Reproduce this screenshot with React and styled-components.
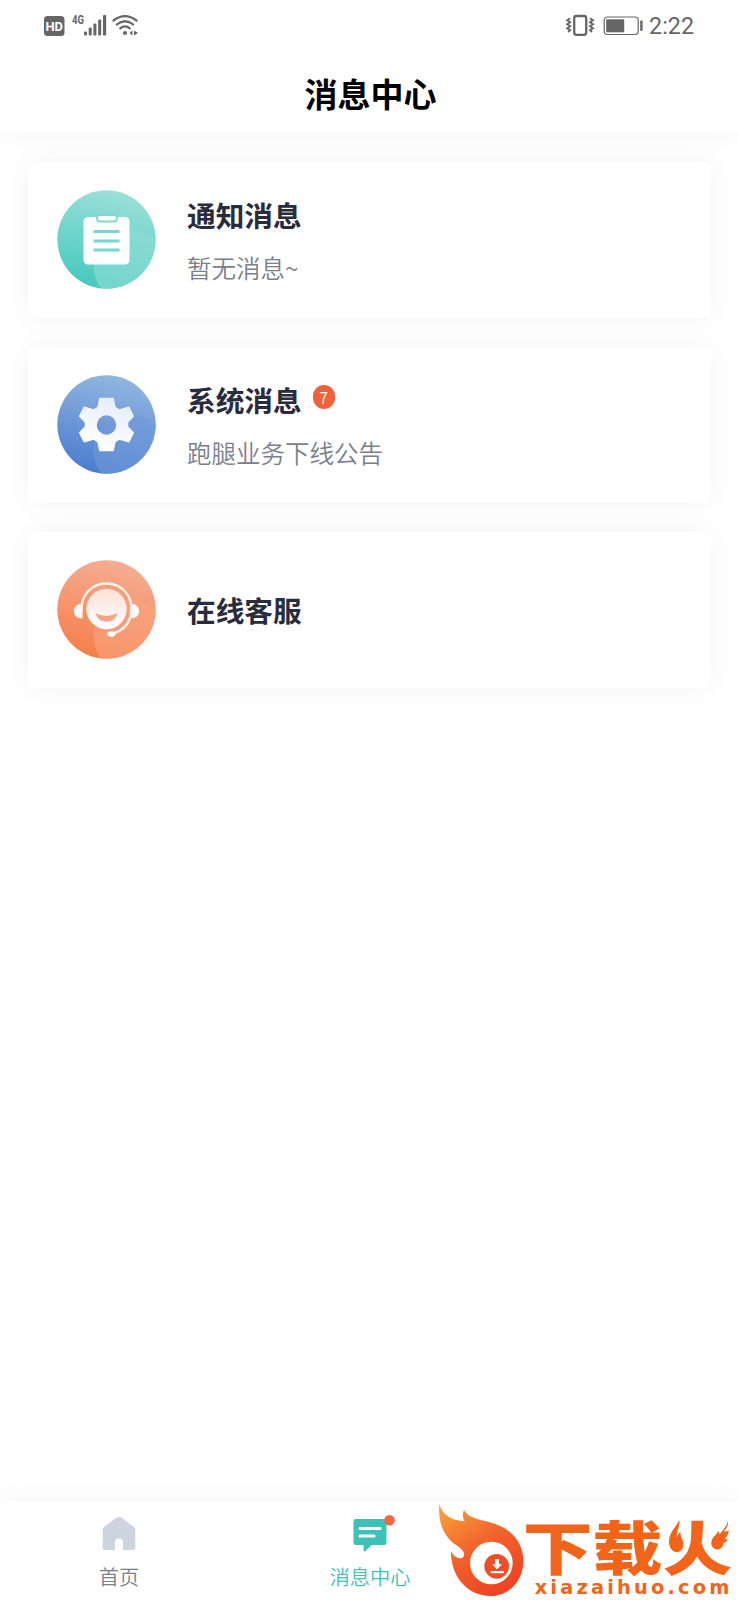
import React from 'react';
import styled, { createGlobalStyle } from 'styled-components';

const palette = {
  teal: '#3dc2b8',
  orange: '#f0623a',
  brand: '#f26419',
  title: '#292c3c',
  sub: '#7b7e8b',
  status: '#666666',
};

const GlobalStyle = createGlobalStyle`
  * {
    box-sizing: border-box;
  }
  body {
    margin: 0;
    background: #fff;
    font-family: 'Noto Sans CJK SC', 'Noto Sans', sans-serif;
  }
`;

const StatusIcons = () => (
  <svg width="110" height="30" viewBox="0 0 110 30">
    <rect x="1" y="6" width="20.5" height="20" rx="3.5" fill={palette.status} />
    <StatusText x="2.5" y="20.8" fontSize="13.5" textLength="17.5" lengthAdjust="spacingAndGlyphs" fill="#fff">
      HD
    </StatusText>
    <StatusText x="29" y="14" fontSize="12.5" textLength="12" lengthAdjust="spacingAndGlyphs">
      4G
    </StatusText>
    <g fill={palette.status}>
      <rect x="41" y="21.5" width="3" height="4" rx="1" />
      <rect x="45.7" y="17.5" width="3" height="8" rx="1" />
      <rect x="50.4" y="13.5" width="3" height="12" rx="1" />
      <rect x="55.2" y="9.5" width="3" height="16" rx="1" />
      <rect x="60" y="5" width="3.2" height="20.5" rx="1" />
      <circle cx="82" cy="23" r="2.1" />
      <path d="M89.5 20.5v5l-3-2.5zM91 20.5l4 2.5-4 2.5z" />
    </g>
    <g fill="none" stroke={palette.status} strokeWidth="2.2" strokeLinecap="round">
      <path d="M70.5 10.5Q82 1.8 93.5 10.5" />
      <path d="M73.8 14.5Q82 8 90.2 14.5" />
      <path d="M77.2 18.4Q82 14.5 86.8 18.4" />
    </g>
  </svg>
);

const PowerIcons = () => (
  <svg width="78" height="30" viewBox="0 0 78 30">
    <g fill="none" stroke={palette.status}>
      <rect x="9.2" y="6" width="12" height="18.8" rx="2.2" strokeWidth="2.3" />
      <path
        d="M5.2 8.2l-3 2 3 2-3 2 3 2-3 2 3 2-2 1.8M25 8.2l3 2-3 2 3 2-3 2 3 2-3 2 2 1.8"
        strokeWidth="1.9"
      />
      <rect x="39.2" y="7" width="34" height="17.5" rx="3.2" strokeWidth="1.2" />
    </g>
    <rect x="41.2" y="9.3" width="18" height="13" fill={palette.status} />
    <rect x="75.2" y="10.5" width="2.4" height="10.5" rx="0.8" fill={palette.status} />
  </svg>
);

const RoundIcon = ({ id, from, to, shine, children }) => (
  <IconSvg width="99" height="99" viewBox="0 0 99 99">
    <defs>
      <linearGradient id={`${id}-bg`} x1="0.62" y1="0" x2="0.38" y2="1">
        <stop offset="0" stopColor={from} />
        <stop offset="1" stopColor={to} />
      </linearGradient>
      <clipPath id={`${id}-clip`}>
        <circle cx="49.5" cy="49.5" r="49.2" />
      </clipPath>
    </defs>
    <circle cx="49.5" cy="49.5" r="49.2" fill={`url(#${id}-bg)`} />
    <g clipPath={`url(#${id}-clip)`}>
      <circle cx="73" cy="76" r="36.5" fill={shine} fillOpacity="0.6" />
    </g>
    {children}
  </IconSvg>
);

const NoticeIcon = () => (
  <RoundIcon id="notice" from="#9de0d9" to="#46c9be" shine="#8fded7">
    <rect x="26.5" y="27" width="46" height="47.5" rx="4.5" fill="#fbfffe" />
    <rect x="40" y="25" width="20" height="6.5" rx="3" fill="#fbfffe" stroke="#84d7cf" strokeWidth="1.8" />
    <path d="M36.5 41.5h26M36.5 51h26M36.5 60h26" stroke="#7fd5ce" strokeWidth="3.2" />
  </RoundIcon>
);

const SystemIcon = () => (
  <RoundIcon id="system" from="#92b7e0" to="#4b7ccf" shine="#6f9adb">
    <defs>
      <linearGradient id="gear" x1="0.7" y1="0" x2="0.3" y2="1">
        <stop offset="0" stopColor="#e6edf8" />
        <stop offset="1" stopColor="#fff" />
      </linearGradient>
      <mask id="gear-hole">
        <rect width="99" height="99" fill="#fff" />
        <circle cx="49.5" cy="50" r="9.7" fill="#000" />
      </mask>
    </defs>
    <path
      mask="url(#gear-hole)"
      fill="url(#gear)"
      stroke="url(#gear)"
      strokeWidth="1.6"
      strokeLinejoin="round"
      d="M43 23.5h13l2 9 4.5 2.6 9.3-2.8 4.5 9-5.8 6v4.4l5.8 6-4.5 9-9.3-2.8-4.5 2.6-2 9H43l-2-9-4.5-2.6-9.3 2.8-4.5-9 5.8-6v-4.4l-5.8-6 4.5-9 9.3 2.8 4.5-2.6z"
    />
  </RoundIcon>
);

const ServiceIcon = () => (
  <RoundIcon id="service" from="#f5ae95" to="#f67e49" shine="#faa582">
    <defs>
      <linearGradient id="face" x1="0" y1="0" x2="0" y2="1">
        <stop offset="0" stopColor="#fce0d6" />
        <stop offset="1" stopColor="#fff" />
      </linearGradient>
    </defs>
    <path d="M25.5 43.5v15c-5 0-8.7-3-8.7-7.2 0-4.3 3.7-7.8 8.7-7.8zM73.5 43.5v15c5 0 8.7-3 8.7-7.2 0-4.3-3.7-7.8-8.7-7.8z" fill="#fff8f5" />
    <path
      d="M24.8 52C23 36 34 23.5 49.5 23.5S76 36 74.2 52C73 63 66 71 54 74"
      fill="none"
      stroke="#fff2ed"
      strokeWidth="2.3"
    />
    <circle cx="49.5" cy="49" r="20.2" fill="url(#face)" />
    <path d="M38.5 53q11 6 22 0c-1.5 5.5-5.5 8.7-11 8.7s-9.5-3.2-11-8.7z" fill="#f6a487" />
    <ellipse cx="54.3" cy="74" rx="4" ry="2.7" fill="#fff" />
  </RoundIcon>
);

const HomeIcon = () => (
  <TabIcon width="34" height="36" viewBox="0 0 34 36">
    <path
      d="M14.7 1.6q2.3-1.7 4.6 0l12.5 9.3q1.5 1.2 1.5 3V32q0 2-2 2H21v-7.5a4 4 0 0 0-8 0V34H2.7q-2 0-2-2V13.9q0-1.8 1.5-3z"
      fill="#ccd4df"
    />
  </TabIcon>
);

const MessageIcon = () => (
  <TabIcon $shift width="44" height="38" viewBox="0 0 44 38">
    <path
      d="M4 5h28q2.5 0 2.5 2.5v21q0 2.5-2.5 2.5H19.5l-6 6q-2 1.3-2-1V31H4q-2.5 0-2.5-2.5v-21Q1.5 5 4 5z"
      fill={palette.teal}
    />
    <path d="M8 14.5h20M8 22h14" stroke="#fff" strokeWidth="3.2" strokeLinecap="round" />
    <circle cx="37.5" cy="6.3" r="5.3" fill="#ef6842" />
  </TabIcon>
);

const BrandLogo = () => (
  <svg width="308" height="110" viewBox="0 0 924 330">
    <defs>
      <linearGradient id="flame" x1="0.05" y1="0" x2="0.6" y2="1">
        <stop offset="0" stopColor="#f9a53a" />
        <stop offset="0.5" stopColor="#f2642d" />
        <stop offset="1" stopColor="#ee4423" />
      </linearGradient>
    </defs>
    <path
      fill="url(#flame)"
      d="M28 43C38 76 64 92 104 94 97 82 97 71 102 60c12 22 36 26 78 37 63 16 100 60 100 116 0 61-44 105-99 105-67 0-119-56-118-134 9 17 24 25 34 19 13-9 2-26-20-39C40 140 23 93 28 43z"
    />
    <circle cx="184" cy="219" r="64" fill="#fff" />
    <circle cx="200" cy="229" r="37" fill="#ef4d25" />
    <path d="M195 208h12v15h9l-15 15-15-15h9zM182 243h40v7h-40z" fill="#fff" />
    <BrandName x="278" y="240" fontSize="175" textLength="629" lengthAdjust="spacingAndGlyphs">
      下载火
    </BrandName>
    {/* side strokes of the last character are replaced by two small flames */}
    <path fill="#fff" d="M706 80h75v82l-12 30h-63zM827 80h97v110h-70l-27-24z" />
    <path
      fill={palette.brand}
      d="M748 90c-12 24-29 36-31 62-1 20 9 34 23 34 15 0 22-14 19-30-2-12-9-18-7-30-6 4-10 10-11 17-4-20 10-30 7-53z"
    />
    <path
      fill={palette.brand}
      d="M893 92c4 16-7 26-11 32q8 2 14-4c0 14-8 23-12 26q5 3 9 1c-3 9-8 11-12 11-1 14-13 22-23 20-16-4-18-22-8-36 6-8 12-10 14-20q5 6 4 12c10-14 22-22 25-42z"
    />
    <BrandUrl x="314" y="312" fontSize="58" textLength="584">
      xiazaihuo.com
    </BrandUrl>
  </svg>
);

const MessageCard = ({ icon, title, desc, count }) => (
  <Card>
    {icon}
    <CardBody>
      <CardTitle>
        {title}
        {count && <Badge>{count}</Badge>}
      </CardTitle>
      {desc && <CardDesc>{desc}</CardDesc>}
    </CardBody>
  </Card>
);

const App = () => (
  <Screen>
    <GlobalStyle />
    <Header>
      <StatusBar>
        <StatusIcons />
        <StatusRight>
          <PowerIcons />
          <Clock>2:22</Clock>
        </StatusRight>
      </StatusBar>
      <PageTitle>消息中心</PageTitle>
    </Header>
    <CardList>
      <MessageCard icon={<NoticeIcon />} title="通知消息" desc="暂无消息~" />
      <MessageCard icon={<SystemIcon />} title="系统消息" desc="跑腿业务下线公告" count={7} />
      <MessageCard icon={<ServiceIcon />} title="在线客服" />
    </CardList>
    <TabBar>
      <Tab>
        <HomeIcon />
        <TabLabel>首页</TabLabel>
      </Tab>
      <Tab $active>
        <MessageIcon />
        <TabLabel>消息中心</TabLabel>
      </Tab>
    </TabBar>
    <Watermark>
      <BrandLogo />
    </Watermark>
  </Screen>
);

const Screen = styled.div`
  position: relative;
  display: flex;
  flex-direction: column;
  width: 738px;
  height: 1600px;
  background: #fff;
  overflow: hidden;
`;

const Header = styled.header`
  height: 133px;
  background: #fff;
  box-shadow: 0 0 28px rgba(0, 0, 0, 0.05);
`;

const StatusBar = styled.div`
  display: flex;
  justify-content: space-between;
  height: 52px;
  padding: 10px 44px 0 43px;
`;

const StatusRight = styled.div`
  display: flex;
  gap: 6px;
`;

const StatusText = styled.text`
  font-family: Roboto, sans-serif;
  font-weight: 700;
  fill: ${props => props.fill || palette.status};
`;

const Clock = styled.span`
  font-family: Roboto, sans-serif;
  font-size: 23.3px;
  line-height: 33px;
  color: ${palette.status};
`;

const PageTitle = styled.h1`
  margin: 0;
  padding-left: 3px;
  font-size: 33px;
  font-weight: 700;
  line-height: 82px;
  text-align: center;
  color: #000;
`;

const CardList = styled.main`
  display: flex;
  flex: 1;
  flex-direction: column;
  gap: 29px;
  padding: 29px 27px 0 28px;
`;

const Card = styled.section`
  display: flex;
  align-items: center;
  gap: 31px;
  height: 156px;
  padding-left: 29px;
  border-radius: 6px;
  background: #fff;
  box-shadow: 0 0 28px rgba(0, 0, 0, 0.05);
`;

const IconSvg = styled.svg`
  margin-bottom: 2px;
`;

const CardBody = styled.div`
  display: flex;
  flex-direction: column;
  gap: 12px;
`;

const CardTitle = styled.div`
  display: flex;
  align-items: center;
  font-size: 28.7px;
  font-weight: 700;
  line-height: 42px;
  color: ${palette.title};

  &:not(:only-child) {
    padding-top: 2px;
  }
`;

const CardDesc = styled.div`
  font-size: 24.5px;
  font-weight: 350;
  line-height: 40px;
  color: ${palette.sub};
`;

const Badge = styled.span`
  width: 22px;
  height: 24px;
  margin: -7px 0 0 11px;
  border-radius: 11px;
  background: ${palette.orange};
  font-size: 16px;
  font-weight: 350;
  line-height: 25px;
  text-align: center;
  color: #fff;
`;

const TabBar = styled.nav`
  display: flex;
  height: 98px;
  background: #fff;
  box-shadow: 0 0 28px rgba(0, 0, 0, 0.05);
`;

const Tab = styled.div`
  display: flex;
  flex-direction: column;
  align-items: center;
  justify-content: flex-end;
  gap: 8px;
  width: ${props => (props.$active ? '264px' : '238px')};
  padding-bottom: 8px;
  color: ${props => (props.$active ? palette.teal : palette.sub)};
`;

const TabIcon = styled.svg`
  margin-left: ${props => (props.$shift ? '8px' : '0')};
`;

const TabLabel = styled.span`
  font-size: 20.3px;
  font-weight: 350;
  line-height: 32px;
`;

const Watermark = styled.div`
  position: absolute;
  right: 0;
  bottom: 0;
  height: 110px;
`;

const BrandName = styled.text`
  font-family: 'Noto Sans CJK SC', sans-serif;
  font-weight: 900;
  fill: ${palette.brand};
`;

const BrandUrl = styled.text`
  font-family: 'DejaVu Sans', sans-serif;
  font-weight: 700;
  fill: ${palette.brand};
`;

export default App;
